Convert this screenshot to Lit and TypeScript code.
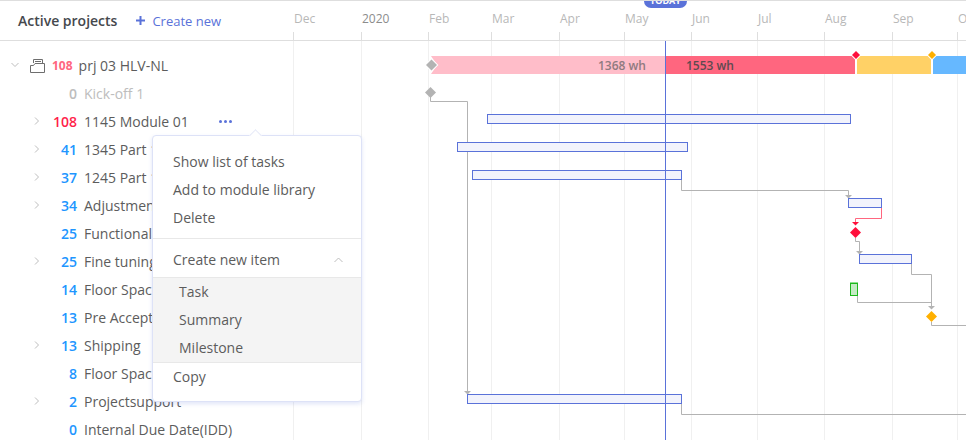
import { LitElement, html, css, svg } from 'lit';
import { customElement } from 'lit/decorators.js';

interface Row {
  count: number;
  name: string;
  tone: string;
  arrow?: boolean;
}

const ROWS: Row[] = [
  { count: 0, name: 'Kick-off 1', tone: 'muted' },
  { count: 108, name: '1145 Module 01', tone: 'red', arrow: true },
  { count: 41, name: '1345 Part 1', tone: 'blue', arrow: true },
  { count: 37, name: '1245 Part 1', tone: 'blue', arrow: true },
  { count: 34, name: 'Adjustments', tone: 'blue', arrow: true },
  { count: 25, name: 'Functional tests', tone: 'blue' },
  { count: 25, name: 'Fine tuning', tone: 'blue', arrow: true },
  { count: 14, name: 'Floor Space', tone: 'blue' },
  { count: 13, name: 'Pre Acceptance', tone: 'blue' },
  { count: 13, name: 'Shipping', tone: 'blue', arrow: true },
  { count: 8, name: 'Floor Space', tone: 'blue' },
  { count: 2, name: 'Projectsupport', tone: 'blue', arrow: true },
  { count: 0, name: 'Internal Due Date(IDD)', tone: 'blue' },
];

// label and width of each timeline column
const MONTHS: [string, number][] = [
  ['Dec', 68], ['2020', 67], ['Feb', 63], ['Mar', 68], ['Apr', 65], ['May', 67],
  ['Jun', 66], ['Jul', 67], ['Aug', 68], ['Sep', 65], ['Oct', 9],
];

const BARS = [
  [487.5, 114.5, 363], [457.5, 142.5, 230], [472.5, 170.5, 209], [848.5, 198.5, 33],
  [859.5, 254.5, 52], [467.5, 394.5, 214],
];

const LINKS = [
  'M430.5 97V101.5H467.5V392',
  'M681.5 179V190.5H848.5V196',
  'M855.5 238V241.5H859.5V252',
  'M911.5 263V274.5H931.5V306',
  'M857.5 295V302.5H931.5',
  'M931.5 322V325.5H966',
  'M681.5 403V414.5H966',
];

const ARROWS: [number, number][] = [[467.5, 391], [848.5, 195], [859.5, 251], [931.5, 306]];

const diamond = (x: number, y: number, r: number, fill: string, halo = false) =>
  svg`<path d="M${x - r} ${y}L${x} ${y - r}L${x + r} ${y}L${x} ${y + r}Z" fill=${fill}
    stroke=${halo ? '#fff' : 'none'} stroke-width=${halo ? 2 : 0} paint-order="stroke" />`;

const arrow = (x: number, y: number, fill: string) =>
  svg`<path d="M${x - 3.5} ${y}H${x + 3.5}L${x} ${y + 3.5}Z" fill=${fill} />`;

@customElement('app-root')
export class AppRoot extends LitElement {
  static styles = css`
    :host {
      display: block;
      width: 966px;
      height: 440px;
      overflow: hidden;
      position: relative;
      font-family: 'Open Sans', sans-serif;
      font-size: 14px;
      color: #5c5c5c;
      background: #fff;
      border-top: 1px solid #dedede;
      box-sizing: border-box;
    }

    .header {
      display: flex;
      height: 40px;
      border-bottom: 1px solid #dedede;
      box-sizing: border-box;
    }

    .header__left {
      width: 293px;
      flex: none;
      display: flex;
      align-items: center;
      padding: 0 0 0 18px;
      box-sizing: border-box;
    }

    .title {
      font-weight: 600;
      color: #45484d;
    }

    .create {
      display: flex;
      align-items: center;
      gap: 7px;
      margin-left: 19px;
      font-size: 13px;
      color: #5a72d9;
    }

    .months {
      display: flex;
      flex: 1;
    }

    .month {
      flex: none;
      box-sizing: border-box;
      font-size: 12px;
      line-height: 36px;
      color: #b8b8b8;
      padding-left: 1px;
      position: relative;
    }

    .month--year {
      color: #8c8c8c;
    }

    .month::before {
      content: '';
      position: absolute;
      left: 0;
      top: 31px;
      height: 8px;
      width: 1px;
      background: #dedede;
    }

    .body {
      display: flex;
      height: 399px;
    }

    .tree {
      width: 293px;
      flex: none;
      padding-top: 10px;
      box-sizing: border-box;
    }

    .row {
      display: flex;
      align-items: center;
      height: 28px;
      white-space: nowrap;
    }

    .toggle {
      width: 42px;
      margin-left: 36px;
      flex: none;
      display: none;
    }

    .caret {
      width: 42px;
      flex: none;
      padding-left: 37px;
      box-sizing: content-box;
      display: flex;
    }

    .count {
      width: 36px;
      flex: none;
      text-align: right;
      font-weight: 600;
      margin-right: 7px;
    }

    .row {
      padding-left: 0;
    }

    .lead {
      width: 41px;
      flex: none;
      display: flex;
      justify-content: flex-end;
      padding-right: 0;
      box-sizing: border-box;
    }

    .count--red { color: #ff1f4b; }
    .count--blue { color: #1e96ff; }
    .count--muted { color: #bdbdbd; }
    .name--muted { color: #bdbdbd; }

    .row--root {
      padding-left: 11px;
    }

    .root-icon {
      margin-left: 11px;
      flex: none;
    }

    .root-count {
      font-size: 12px;
      font-weight: 700;
      color: #ff667f;
      margin-left: 7px;
      margin-right: 6px;
    }

    .dots {
      display: flex;
      gap: 2px;
      margin-left: 30px;
    }

    .dots i {
      width: 3px;
      height: 3px;
      border-radius: 50%;
      background: #5a72d9;
    }

    .chart {
      flex: 1;
      position: relative;
      display: flex;
    }

    .col {
      flex: none;
      box-sizing: border-box;
      border-left: 1px solid #f0f0f0;
    }

    .chart svg {
      position: absolute;
      inset: 0;
      font-family: 'Open Sans', sans-serif;
    }

    .today {
      position: absolute;
      left: 644px;
      top: -7px;
      width: 43px;
      height: 14px;
      border-radius: 0 0 7px 7px / 0 0 7px 7px;
      background: #5a72d9;
      color: #fff;
      font-size: 9px;
      font-weight: 700;
      line-height: 14px;
      text-align: center;
    }

    .menu {
      position: absolute;
      left: 152px;
      top: 134px;
      width: 210px;
      height: 267px;
      box-sizing: border-box;
      background: #fff;
      border: 1px solid #dde2f7;
      border-radius: 4px;
      box-shadow: 0 2px 4px rgba(90, 114, 217, 0.18);
      padding-top: 12px;
    }

    .menu::before {
      content: '';
      position: absolute;
      left: 98px;
      top: -5px;
      width: 8px;
      height: 8px;
      background: #fff;
      border-left: 1px solid #e6e9f8;
      border-top: 1px solid #e6e9f8;
      transform: rotate(45deg);
    }

    .item {
      height: 28px;
      line-height: 28px;
      padding-left: 20px;
    }

    .sep {
      margin-top: 6px;
      border-top: 1px solid #e8e8e8;
      padding-top: 7px;
    }

    .expander {
      display: flex;
      align-items: center;
      justify-content: space-between;
      padding-right: 18px;
    }

    .sub {
      background: #f4f4f4;
      border-top: 1px solid #e8e8e8;
      border-bottom: 1px solid #e8e8e8;
      margin-top: 3px;
    }

    .sub .item {
      padding-left: 26px;
    }
  `;

  private renderCaret(down = false) {
    return html`<svg width="8" height="8" viewBox="0 0 8 8" fill="none" stroke="#bdbdbd" stroke-width="1">
      <path d=${down ? 'M0.5 2L4 5.5L7.5 2' : 'M2 0.5L5.5 4L2 7.5'} />
    </svg>`;
  }

  private renderChart() {
    return svg`<svg width="673" height="399" viewBox="293 41 673 399">
      <path d="M431 56H665V74H431L437 65Z" fill="#ffbdc9" />
      <rect x="665" y="56" width="190" height="18" fill="#ff667f" />
      <rect x="857" y="56" width="74" height="18" fill="#ffd166" />
      <rect x="933" y="56" width="33" height="18" fill="#66b8ff" />
      <text x="598" y="69.5" font-size="12" font-weight="600" fill="#8f7a80">1368 wh</text>
      <text x="686" y="69.5" font-size="12" font-weight="600" fill="#5e4a50">1553 wh</text>
      ${diamond(431.5, 65, 5.5, '#b3b3b3', true)}
      ${diamond(856, 55, 4, '#ff0f3c', true)}
      ${diamond(932, 55, 4, '#ffb000', true)}
      ${diamond(430.5, 92.5, 5.5, '#b3b3b3')}
      <g fill="none" stroke="#b3b3b3">
        ${LINKS.map((d) => svg`<path d=${d} />`)}
      </g>
      <path d="M881.5 207V218.5H855.5V222" fill="none" stroke="#ff667f" />
      ${ARROWS.map(([x, y]) => arrow(x, y, '#b3b3b3'))}
      ${arrow(855.5, 222, '#ff0f3c')}
      ${diamond(855.5, 232.5, 5.5, '#ff0f3c')}
      ${diamond(931.5, 316.5, 5.5, '#ffb000')}
      ${BARS.map(
        ([x, y, w]) => svg`<rect x=${x} y=${y} width=${w} height="9" fill="#f2f3fc" stroke="#5a72d9" />`
      )}
      <rect x="850.5" y="283.5" width="7" height="12" fill="#c5ebc5" stroke="#1db81d" />
      <rect x="850" y="282" width="8" height="1" fill="#90e090" />
      <rect x="665" y="41" width="1" height="399" fill="#5a72d9" />
    </svg>`;
  }

  render() {
    return html`
      <div class="header">
        <div class="header__left">
          <span class="title">Active projects</span>
          <span class="create">
            <svg width="9" height="9" viewBox="0 0 9 9" fill="#5a72d9"><path d="M3.5 0h2v3.5H9v2H5.5V9h-2V5.5H0v-2h3.5z" /></svg>
            Create new
          </span>
        </div>
        <div class="months">
          ${MONTHS.map(
            ([label, w]) => html`<div class="month ${label === '2020' ? 'month--year' : ''}" style="width:${w}px">${label}</div>`
          )}
        </div>
      </div>
      <div class="body">
        <div class="tree">
          <div class="row row--root">
            ${this.renderCaret(true)}
            <svg class="root-icon" width="15" height="15" viewBox="0 0 15 15" fill="none" stroke="#6e6e6e">
              <path d="M3.5 5V1.5H12.5V5M5 3.5H11M.5 7.5V14.5H14.5V5.5H5L3.5 7.5H.5Z" />
            </svg>
            <span class="root-count">108</span>
            <span>prj 03 HLV-NL</span>
          </div>
          ${ROWS.map(
            (r, i) => html`<div class="row">
              <div class="lead">${r.arrow ? this.renderCaret() : ''}</div>
              <span class="count count--${r.tone}">${r.count}</span>
              <span class=${r.tone === 'muted' ? 'name--muted' : ''}>${r.name}</span>
              ${i === 1 ? html`<span class="dots"><i></i><i></i><i></i></span>` : ''}
            </div>`
          )}
        </div>
        <div class="chart">
          ${MONTHS.map(([, w]) => html`<div class="col" style="width:${w}px"></div>`)}
          ${this.renderChart()}
        </div>
      </div>
      <div class="today">TODAY</div>
      <div class="menu">
        <div class="item">Show list of tasks</div>
        <div class="item">Add to module library</div>
        <div class="item">Delete</div>
        <div class="sep">
          <div class="item expander">Create new item ${this.renderCaretUp()}</div>
        </div>
        <div class="sub">
          <div class="item">Task</div>
          <div class="item">Summary</div>
          <div class="item">Milestone</div>
        </div>
        <div class="item">Copy</div>
      </div>
    `;
  }

  private renderCaretUp() {
    return html`<svg width="9" height="6" viewBox="0 0 9 6" fill="none" stroke="#bdbdbd"><path d="M.5 5L4.5 1L8.5 5" /></svg>`;
  }
}
